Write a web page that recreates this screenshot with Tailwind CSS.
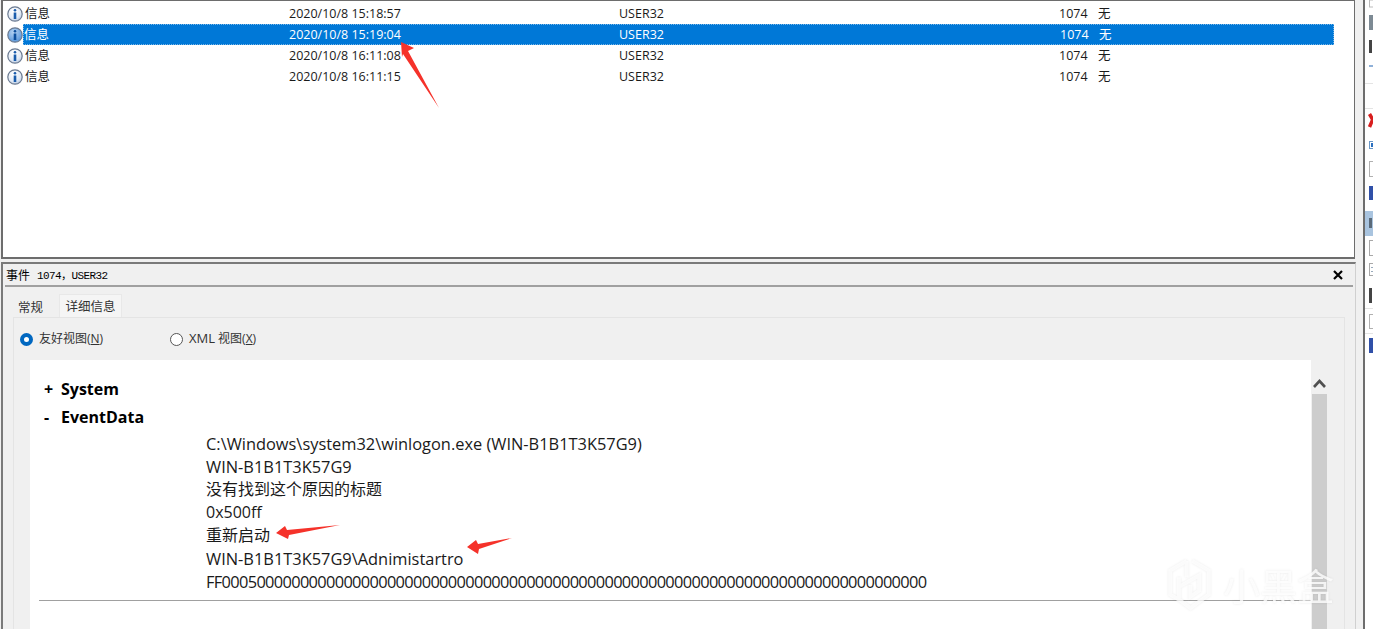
<!DOCTYPE html>
<html lang="zh-CN">
<head>
    <meta charset="UTF-8">
    <title>事件查看器</title>
    <script src="https://cdn.jsdelivr.net/npm/@tailwindcss/browser@4"></script>
</head>
<body class="bg-[#f0f0f0]">
<div class="relative w-[1373px] h-[629px] overflow-hidden flex bg-[#f0f0f0] text-[#1a1a1a] font-['Open_Sans','Noto_Sans_CJK_SC',sans-serif]">

    <svg class="absolute w-0 h-0">
        <defs>
            <radialGradient id="infoFill" cx="0.4" cy="0.3" r="0.8"><stop offset="0" stop-color="#ffffff"/><stop offset="0.6" stop-color="#e4ebf5"/><stop offset="1" stop-color="#a9bedc"/></radialGradient>
            <radialGradient id="infoFillSel" cx="0.4" cy="0.3" r="0.8"><stop offset="0" stop-color="#b4d2f2"/><stop offset="1" stop-color="#4d8fd8"/></radialGradient>
        </defs>
    </svg>

    <!-- left: event list + detail pane -->
    <div class="w-[1363px] h-full flex flex-col pl-[1px]">

        <!-- event list -->
        <div class="h-[260px] w-[1354px] -mt-[1px] bg-white border-2 border-[#6d6d6d] border-r-[1px] pt-[2px] text-[12.5px]">
            <div class="flex items-center h-[21px] pt-[1px]">
                <svg class="w-[16px] h-[16px] ml-[4px] -mt-[1px] shrink-0" viewBox="0 0 16 16"><circle cx="8" cy="8" r="7.2" fill="url(#infoFill)" stroke="#6b7a90" stroke-width="1.2"/><circle cx="8" cy="4.2" r="1.3" fill="#1a5cac"/><rect x="6.700" y="6.500" width="2.600" height="6.500" fill="#1a5cac"/></svg>
                <span class="w-[265px] ml-[1px] pl-[1px]">信息</span>
                <span class="w-[330px]">2020/10/8 15:18:57</span>
                <span class="w-[440px]">USER32</span>
                <span class="w-[39px]">1074</span>
                <span>无</span>
            </div>
            <div class="flex items-center h-[21px]">
                <svg class="w-[16px] h-[16px] ml-[4px] shrink-0" viewBox="0 0 16 16"><circle cx="8" cy="8" r="7.2" fill="url(#infoFillSel)" stroke="#6b7a90" stroke-width="1.2"/><circle cx="8" cy="4.2" r="1.3" fill="#0c4f9e"/><rect x="6.700" y="6.500" width="2.600" height="6.500" fill="#0c4f9e"/></svg>
                <div class="flex items-center h-[21px] w-[1311px] pt-[1px] bg-[#0078d7] border border-dotted border-[#7ab6e6] text-white">
                    <span class="w-[265px]">信息</span>
                    <span class="w-[330px]">2020/10/8 15:19:04</span>
                    <span class="w-[441px]">USER32</span>
                    <span class="w-[39px]">1074</span>
                    <span>无</span>
                </div>
            </div>
            <div class="flex items-center h-[21px] pt-[1px]">
                <svg class="w-[16px] h-[16px] ml-[4px] -mt-[1px] shrink-0" viewBox="0 0 16 16"><circle cx="8" cy="8" r="7.2" fill="url(#infoFill)" stroke="#6b7a90" stroke-width="1.2"/><circle cx="8" cy="4.2" r="1.3" fill="#1a5cac"/><rect x="6.700" y="6.500" width="2.600" height="6.500" fill="#1a5cac"/></svg>
                <span class="w-[265px] ml-[1px] pl-[1px]">信息</span>
                <span class="w-[330px]">2020/10/8 16:11:08</span>
                <span class="w-[440px]">USER32</span>
                <span class="w-[39px]">1074</span>
                <span>无</span>
            </div>
            <div class="flex items-center h-[21px] pt-[1px]">
                <svg class="w-[16px] h-[16px] ml-[4px] -mt-[1px] shrink-0" viewBox="0 0 16 16"><circle cx="8" cy="8" r="7.2" fill="url(#infoFill)" stroke="#6b7a90" stroke-width="1.2"/><circle cx="8" cy="4.2" r="1.3" fill="#1a5cac"/><rect x="6.700" y="6.500" width="2.600" height="6.500" fill="#1a5cac"/></svg>
                <span class="w-[265px] ml-[1px] pl-[1px]">信息</span>
                <span class="w-[330px]">2020/10/8 16:11:15</span>
                <span class="w-[440px]">USER32</span>
                <span class="w-[39px]">1074</span>
                <span>无</span>
            </div>
        </div>

        <!-- detail pane -->
        <div class="mt-[3px] w-[1355px] flex-1 border-l-2 border-t-2 border-r border-[#7a7a7a] border-r-[#d0d0d0] flex flex-col min-h-0">
            <div class="h-[21px] flex items-center justify-between pl-[3px] pr-[12px] text-black">
                <span class="flex items-center gap-[7px] pt-[3px] text-[12px]"><span>事件</span><span class="font-['Liberation_Mono','Noto_Sans_CJK_SC',monospace] text-[11px] tracking-[-0.6px]">1074，USER32</span></span>
                <svg class="w-[10px] h-[10px]" viewBox="0 0 10 10"><path d="M1 1 L9 9 M9 1 L1 9" stroke="#000" stroke-width="2.2"/></svg>
            </div>
            <div class="h-[2px] ml-[2px] mr-[2px] bg-[#a0a0a0]"></div>

            <!-- tabs -->
            <div class="flex h-[30px] ml-[11px] pt-[7px] text-[12.5px] text-[#333]">
                <div class="w-[45px] h-[23px] flex items-center pl-[4px] pt-[6px] bg-[#f0f0f0]">常规</div>
                <div class="w-[63px] h-[23px] flex items-center justify-center pt-[3px] bg-[#f5f5f5] border-t border-x border-[#e8e8e8]">详细信息</div>
            </div>

            <!-- tab body -->
            <div class="flex-1 min-h-0 ml-[10px] mr-[10px] bg-[#f0f0f0] border-t border-x border-[#e4e4e4] flex flex-col">
                <div class="h-[42px] flex items-center pl-[6px] text-[12px] text-[#333]">
                    <span class="w-[13px] h-[13px] rounded-full border-[4px] border-[#0067c0] bg-white"></span>
                    <span class="ml-[6px] w-[131px]">友好视图(<span class="underline">N</span>)</span>
                    <span class="w-[13px] h-[13px] rounded-full border border-[#555] bg-white"></span>
                    <span class="ml-[6px]"><span class="text-[13px]">XML</span> 视图(<span class="underline">X</span>)</span>
                </div>
                <div class="flex-1 min-h-0 flex ml-[16px]">
                    <div class="w-[1281px] bg-white pt-[15px] text-black">
                        <div class="flex items-center h-[28px] text-[16px] font-bold"><span class="w-[31px] pl-[14px]">+</span><span>System</span></div>
                        <div class="flex items-center h-[28px] text-[16px] font-bold"><span class="w-[31px] pl-[14px]">-</span><span>EventData</span></div>
                        <div class="pl-[176px] pt-[1px] text-[16.4px] leading-[23px] text-[#1a1a1a]">
                            <div>C:\Windows\system32\winlogon.exe (WIN-B1B1T3K57G9)</div>
                            <div>WIN-B1B1T3K57G9</div>
                            <div class="text-[16px]">没有找到这个原因的标题</div>
                            <div class="text-[16px]">0x500ff</div>
                            <div class="text-[16px]">重新启动</div>
                            <div>WIN-B1B1T3K57G9\Adnimistartro</div>
                            <div class="tracking-[-0.67px]">FF000500000000000000000000000000000000000000000000000000000000000000000000000000000</div>
                        </div>
                        <div class="h-[1px] ml-[9px] mt-[7px] bg-[#a0a0a0]"></div>
                    </div>
                    <!-- scrollbar -->
                    <div class="w-[15px] ml-[1px] flex flex-col">
                        <div class="h-[34px] flex items-end justify-center pb-[6px]">
                            <svg class="w-[13px] h-[9px]" viewBox="0 0 13 9"><path d="M1 8 L6.500 2 L12 8" fill="none" stroke="#505050" stroke-width="2.600"/></svg>
                        </div>
                        <div class="flex-1 bg-[#cdcdcd]"></div>
                    </div>
                </div>
            </div>
        </div>
    </div>

    <!-- right: clipped action pane -->
    <div class="w-[10px] h-full border-l-2 border-[#6d6d6d] bg-white">
        <svg class="w-[8px] h-[629px] block" viewBox="0 0 8 629">
            <rect x="0" y="211" width="8" height="25" fill="#a9c4df"/>
            <rect x="0" y="83" width="8" height="1" fill="#e4e4e4"/>
            <rect x="0" y="108" width="8" height="1" fill="#e4e4e4"/>
            <rect x="0" y="308" width="8" height="1" fill="#e4e4e4"/>
            <rect x="0" y="333" width="8" height="1" fill="#e4e4e4"/>
            <g transform="translate(4 0)">
                <rect x="0.500" y="0" width="5" height="7" fill="none" stroke="#bbb"/>
                <rect x="0" y="15" width="4" height="15" fill="#7d8a94"/>
                <rect x="0" y="40" width="3" height="13" fill="#444"/>
                <rect x="0" y="65" width="4" height="2" fill="#8fb0d8"/>
                <path d="M0.500 114 L4 120 M4 119 L0.500 127" fill="none" stroke="#d81e1e" stroke-width="3.500"/>
                <rect x="0.500" y="141.500" width="5" height="7" fill="#fff" stroke="#6a98c8"/>
                <rect x="2" y="143" width="3" height="4" fill="#2a70c0"/>
                <rect x="0.500" y="161.500" width="5" height="15" fill="none" stroke="#b0b0b0"/>
                <rect x="0" y="186" width="4" height="14" fill="#3050a8"/>
                <rect x="0" y="218" width="3" height="10" fill="#5a6a7a"/>
                <rect x="0.500" y="240.500" width="5" height="15" fill="none" stroke="#a8a8a8"/>
                <rect x="0.500" y="263.500" width="5" height="12" fill="none" stroke="#a8a8a8"/>
                <rect x="2" y="267" width="3" height="1" fill="#9ab"/>
                <rect x="2" y="271" width="3" height="1" fill="#9ab"/>
                <rect x="0" y="288" width="3" height="15" fill="#444"/>
                <rect x="0.500" y="314.500" width="5" height="14" fill="none" stroke="#b0b0b0"/>
                <rect x="0" y="338" width="4" height="15" fill="#3050a8"/>
            </g>
        </svg>
    </div>

    <!-- red annotation arrows -->
    <svg class="absolute left-0 top-0 w-[1373px] h-[629px] pointer-events-none" viewBox="0 0 1373 629">
        <polygon points="401,42 414,48 408,51 439,108 403,54 402,57" fill="#f5322a"/>
        <polygon points="276,533 285,526 287,530 340,525 289,535 288,539" fill="#f5322a"/>
        <polygon points="467,547 476,540 478,544 512,538 479,549 478,554" fill="#f5322a"/>
    </svg>

    <!-- watermark -->
    <div class="absolute left-[1167px] top-[558px] flex items-center gap-[11px] text-white/80 drop-shadow-[0_0_1px_rgba(0,0,0,0.1)]">
        <svg class="w-[45px] h-[54px]" viewBox="0 0 46 56" fill="none" stroke="#fff" stroke-opacity="0.75" stroke-width="4"><path d="M20 3 L3 13 L3 38 L12 43 M26 3 L43 13 L43 38 L24 52 L12 43 L12 20 M20 3 L20 20 M12 30 L33 18 L33 34 L24 40 L24 28"/></svg>
        <span class="text-[37px] leading-none font-['Noto_Sans_CJK_SC',sans-serif]">小黑盒</span>
    </div>
</div>
</body>
</html>
